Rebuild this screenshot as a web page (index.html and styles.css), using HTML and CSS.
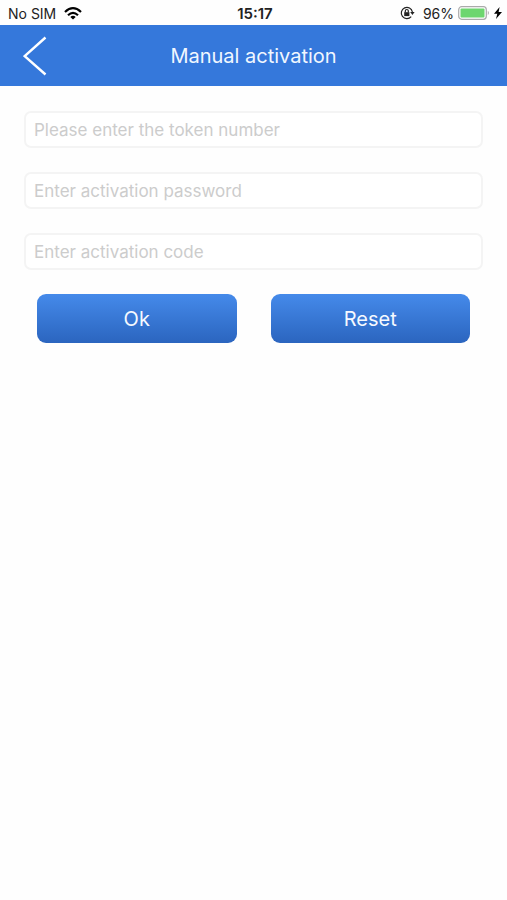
FILE: index.html
```html
<!DOCTYPE html>
<html lang="en">
<head>
<meta charset="utf-8">
<meta name="viewport" content="width=device-width, initial-scale=1">
<title>Manual activation</title>
<link rel="stylesheet" href="styles.css">
</head>
<body>
<div class="status">
  <div class="status-left">
    <span>No SIM</span>
    <svg width="18" height="13" viewBox="0 0 18 13" fill="none" stroke="#000" stroke-width="2.2">
      <path d="M1 5Q9-2.6 17 5M4 8.2Q9 3.6 14 8.2"/>
      <path d="M9 12.6 6.3 9.9Q9 7.7 11.7 9.900Z" fill="#000" stroke="none"/>
    </svg>
  </div>
  <strong class="clock">15:17</strong>
  <div class="status-right">
    <svg class="lock" width="15" height="14" viewBox="0 0 15 14" fill="none" stroke="#222" stroke-width="1.2">
      <path d="M11.2 10.6A5.6 5.6 0 1 1 12.4 6"/>
      <path d="M10.2 6h4.400l-2.200 3z" fill="#222" stroke="none"/>
      <path d="M4.200 6.200h5.200v3.900H4.200z" fill="#222" stroke="none"/>
      <path d="M5.300 6.400V5a1.500 1.500 0 0 1 3 0v1.400"/>
    </svg>
    <span>96%</span>
    <svg width="32" height="14" viewBox="0 0 32 14">
      <rect x=".7" y=".7" width="27.6" height="12.6" rx="3" fill="#fff" stroke="#aaa" stroke-width="1.2"/>
      <rect x="2.5" y="2.5" width="24" height="9" rx="1" fill="#6dd66f"/>
      <path d="M29.800 4.800q2.200 2.200 0 4.400z" fill="#aaa"/>
    </svg>
    <svg width="8" height="12" viewBox="0 0 8 12"><path d="M5.600 0 0 6.800h3.300L2 12l6-7H4.600z"/></svg>
  </div>
</div>
<header class="bar">
  <button class="back" type="button" aria-label="Back">
    <svg width="24" height="40" viewBox="0 0 24 40" fill="none" stroke="#fff" stroke-width="2.4"><path d="M22.500 1.500 1.700 20.200 22.500 38.500"/></svg>
  </button>
  <h1>Manual activation</h1>
</header>
<main>
  <form class="form">
    <input type="text" aria-label="Token number" placeholder="Please enter the token number">
    <input type="password" aria-label="Activation password" placeholder="Enter activation password">
    <input type="text" aria-label="Activation code" placeholder="Enter activation code">
    <div class="actions">
      <button type="submit">Ok</button>
      <button type="reset">Reset</button>
    </div>
  </form>
</main>
</body>
</html>
```
FILE: styles.css
```css
* { box-sizing: border-box; }
body {
  margin: 0;
  background: #fefefe;
  color: #222;
  font-family: Inter, "Liberation Sans", sans-serif;
}
svg { display: block; }
.status {
  display: grid;
  grid-template-columns: 1fr auto 1fr;
  align-items: center;
  height: 25px;
  padding: 1px 5px 0 8px;
  font-size: 14px;
}
.status-left, .status-right {
  display: flex;
  align-items: center;
  gap: 8px;
}
.status-right { justify-content: flex-end; gap: 4px; }
.lock { margin-right: 4px; }
.clock { font-size: 15px; font-weight: 600; }
.bar {
  display: grid;
  grid-template-columns: 47px 1fr 47px;
  align-items: center;
  height: 61px;
  background: #3578db;
}
.back {
  display: flex;
  justify-content: flex-end;
  padding: 0;
  border: 0;
  background: none;
}
h1 {
  margin: 0;
  color: #f0f7ff;
  font-size: 20px;
  font-weight: 400;
  text-align: center;
}
.form {
  display: flex;
  flex-direction: column;
  gap: 24px;
  padding: 25px 24px;
}
input {
  width: 100%;
  height: 37px;
  padding: 0 8px;
  border: 2px solid #f4f4f4;
  border-radius: 7px;
  background: #fff;
  color: #222;
  font: 17px Inter, "Liberation Sans", sans-serif;
}
input::placeholder { color: #ccc; opacity: 1; }
.actions {
  display: grid;
  grid-template-columns: 1fr 1fr;
  gap: 34px;
  padding: 0 13px;
}
.actions button {
  height: 49px;
  padding: 0;
  border: 0;
  border-radius: 9px;
  background: linear-gradient(#458aea, #2b65bf);
  color: #f5f9ff;
  font: 20px Inter, "Liberation Sans", sans-serif;
}
```
